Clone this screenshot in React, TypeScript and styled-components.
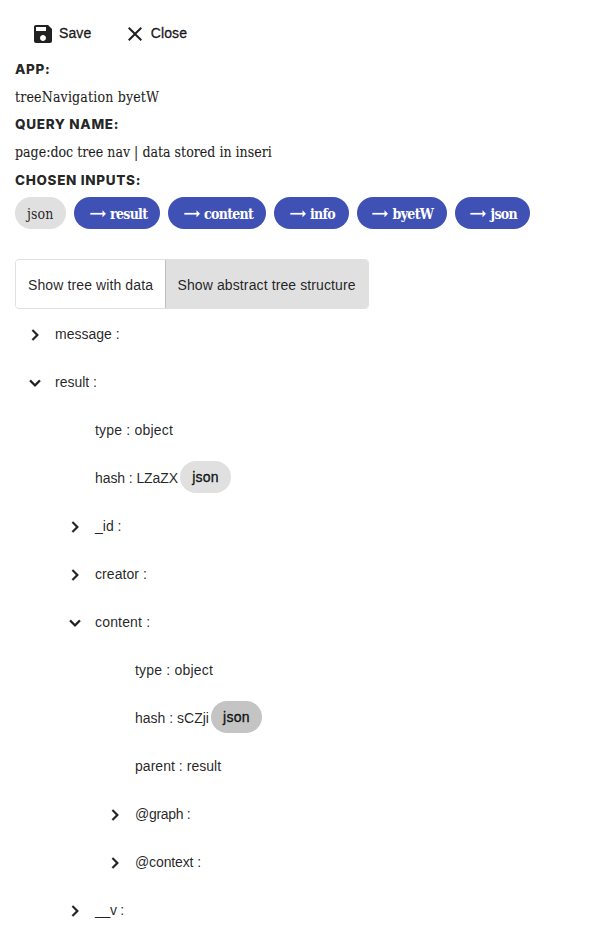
import React from "react";
import styled, { createGlobalStyle } from "styled-components";

const GlobalStyle = createGlobalStyle`
  * { box-sizing: border-box; }
  body {
    margin: 0;
    background: #fff;
    color: rgba(0, 0, 0, 0.87);
    font-family: "Liberation Sans", Arial, sans-serif;
    font-size: 14px;
  }
`;

const Page = styled.main`
  width: 615px;
  height: 933px;
  padding: 16px 15px 0;
  overflow: hidden;
`;

const Toolbar = styled.div`
  display: flex;
  height: 36px;
  padding-left: 16px;
  gap: 31.5px;
`;

const ToolButton = styled.button`
  display: flex;
  align-items: center;
  gap: 4px;
  padding: 0;
  border: 0;
  background: none;
  color: inherit;
  font: 500 14px/36px "Liberation Sans", Arial, sans-serif;
  letter-spacing: 0.1px;
  -webkit-text-stroke: 0.35px currentColor;

  svg { display: block; width: 24px; height: 24px; stroke: none; }
  span { height: 36px; line-height: 34px; }
`;

const Heading = styled.h2`
  margin: 0;
  height: 27.7px;
  font: 800 13.5px/35px Inter, sans-serif;
  letter-spacing: 0.68px;
  white-space: nowrap;
`;

const Value = styled.p<{ $spacing: number }>`
  margin: 0;
  height: 27.7px;
  font: 14px/34px "DejaVu Serif Condensed", "DejaVu Serif", serif;
  font-stretch: condensed;
  letter-spacing: ${(p) => p.$spacing}px;
  white-space: nowrap;
  -webkit-text-stroke: 0.15px currentColor;
`;

const Chips = styled.div`
  display: flex;
  gap: 8px;
  margin-top: 6.5px;
`;

const Chip = styled.span<{ $width: number; $linked?: boolean }>`
  display: flex;
  align-items: center;
  flex: none;
  width: ${(p) => p.$width}px;
  height: 32px;
  padding: 2px 0 0 ${(p) => (p.$linked ? 13.5 : 12)}px;
  border-radius: 16px;
  background: ${(p) => (p.$linked ? "#3f51b5" : "#e0e0e0")};
  color: ${(p) => (p.$linked ? "#fff" : "inherit")};
  font: ${(p) => (p.$linked ? 700 : 400)} 14px/30px "DejaVu Serif Condensed", "DejaVu Serif", serif;
  font-stretch: condensed;
  letter-spacing: ${(p) => (p.$linked ? -0.7 : 0.1)}px;
  white-space: nowrap;

  svg {
    flex: none;
    width: 19.5px;
    height: 19.5px;
    margin: 0 3px 1px 0;
    stroke: currentColor;
    stroke-width: 0.3px;
  }
`;

const ToggleGroup = styled.div`
  display: flex;
  width: 354px;
  height: 50px;
  margin-top: 30px;
  border: 1px solid #e0e0e0;
  border-radius: 4px;
  overflow: hidden;
`;

const Toggle = styled.button<{ $active?: boolean }>`
  flex: ${(p) => (p.$active ? "1" : "0 0 149px")};
  padding: 3px 0 0 ${(p) => (p.$active ? 11.5 : 12)}px;
  border: 0;
  border-left: ${(p) => (p.$active ? "1px solid #bdbdbd" : "0")};
  background: ${(p) => (p.$active ? "#e0e0e0" : "#fff")};
  color: inherit;
  font: 14px "Liberation Sans", Arial, sans-serif;
  letter-spacing: 0.11px;
  text-align: left;
  white-space: nowrap;
`;

const Tree = styled.div`
  display: flex;
  flex-direction: column;
  margin-top: 1px;
`;

const Row = styled.div<{ $depth: number }>`
  display: flex;
  align-items: center;
  flex: none;
  height: 48px;
  padding-left: ${(p) => p.$depth * 40}px;
  white-space: nowrap;
`;

const Arrow = styled.span`
  display: flex;
  justify-content: center;
  width: 40px;
  padding-top: 2px;

  svg {
    width: 22px;
    height: 22px;
    stroke: currentColor;
    stroke-width: 0.4px;
  }
`;

const Label = styled.span<{ $spacing?: number }>`
  letter-spacing: ${(p) => p.$spacing ?? 0}px;
`;

const HashChip = styled.span<{ $focused?: boolean }>`
  width: 51px;
  height: 32px;
  margin: 0 0 2px 2px;
  border-radius: 16px;
  background: ${(p) => (p.$focused ? "#c4c4c4" : "#e0e0e0")};
  font-weight: 500;
  line-height: 32px;
  text-align: center;
  letter-spacing: 0.25px;
  -webkit-text-stroke: 0.4px currentColor;
`;

const Icon = ({ d }: { d: string }) => (
  <svg viewBox="0 0 24 24" fill="currentColor" aria-hidden="true">
    <path d={d} />
  </svg>
);

const icons = {
  save: "M17 3H5c-1.11 0-2 .9-2 2v14c0 1.1.89 2 2 2h14c1.1 0 2-.9 2-2V7l-4-4zm-5 16c-1.66 0-3-1.34-3-3s1.34-3 3-3 3 1.34 3 3-1.34 3-3 3zm3-10H5V5h10v4z",
  close: "M19 6.41L17.59 5 12 10.59 6.41 5 5 6.41 10.59 12 5 17.59 6.41 19 12 13.41 17.59 19 19 17.59 13.41 12z",
  flat: "M22 12l-4-4v3H3v2h15v3z",
  right: "M10 6L8.59 7.41 13.17 12l-4.58 4.59L10 18l6-6z",
  down: "M16.59 8.59L12 13.17 7.41 8.59 6 10l6 6 6-6z",
};

type Node = {
  depth: number;
  text: string;
  spacing?: number;
  arrow?: "right" | "down";
  chip?: "plain" | "focused";
};

const nodes: Node[] = [
  { depth: 0, text: "message :", arrow: "right" },
  { depth: 0, text: "result :", arrow: "down" },
  { depth: 1, text: "type : object", spacing: 0.2 },
  { depth: 1, text: "hash : LZaZX", chip: "plain", spacing: -0.09 },
  { depth: 1, text: "_id :", arrow: "right" },
  { depth: 1, text: "creator :", arrow: "right", spacing: 0.07 },
  { depth: 1, text: "content :", arrow: "down", spacing: 0.17 },
  { depth: 2, text: "type : object", spacing: 0.2 },
  { depth: 2, text: "hash : sCZji", chip: "focused" },
  { depth: 2, text: "parent : result", spacing: 0.04 },
  { depth: 2, text: "@graph :", arrow: "right", spacing: -0.3 },
  { depth: 2, text: "@context :", arrow: "right", spacing: -0.12 },
  { depth: 1, text: "__v :", arrow: "right", spacing: -0.3 },
];

const path = [
  { label: "result", width: 86 },
  { label: "content", width: 98 },
  { label: "info", width: 74.6 },
  { label: "byetW", width: 90 },
  { label: "json", width: 75 },
];

export default function App() {
  return (
    <>
      <GlobalStyle />
      <Page>
        <Toolbar>
          <ToolButton><Icon d={icons.save} /><span>Save</span></ToolButton>
          <ToolButton><Icon d={icons.close} /><span>Close</span></ToolButton>
        </Toolbar>
        <Heading>APP:</Heading>
        <Value $spacing={0.18}>treeNavigation byetW</Value>
        <Heading>QUERY NAME:</Heading>
        <Value $spacing={0.02}>page:doc tree nav | data stored in inseri</Value>
        <Heading>CHOSEN INPUTS:</Heading>
        <Chips>
          <Chip $width={51}>json</Chip>
          {path.map((p) => (
            <Chip key={p.label} $width={p.width} $linked>
              <Icon d={icons.flat} />
              {p.label}
            </Chip>
          ))}
        </Chips>
        <ToggleGroup>
          <Toggle>Show tree with data</Toggle>
          <Toggle $active>Show abstract tree structure</Toggle>
        </ToggleGroup>
        <Tree>
          {nodes.map((n, i) => (
            <Row key={i} $depth={n.depth}>
              <Arrow>{n.arrow && <Icon d={icons[n.arrow]} />}</Arrow>
              <Label $spacing={n.spacing}>{n.text}</Label>
              {n.chip && <HashChip $focused={n.chip === "focused"}>json</HashChip>}
            </Row>
          ))}
        </Tree>
      </Page>
    </>
  );
}
